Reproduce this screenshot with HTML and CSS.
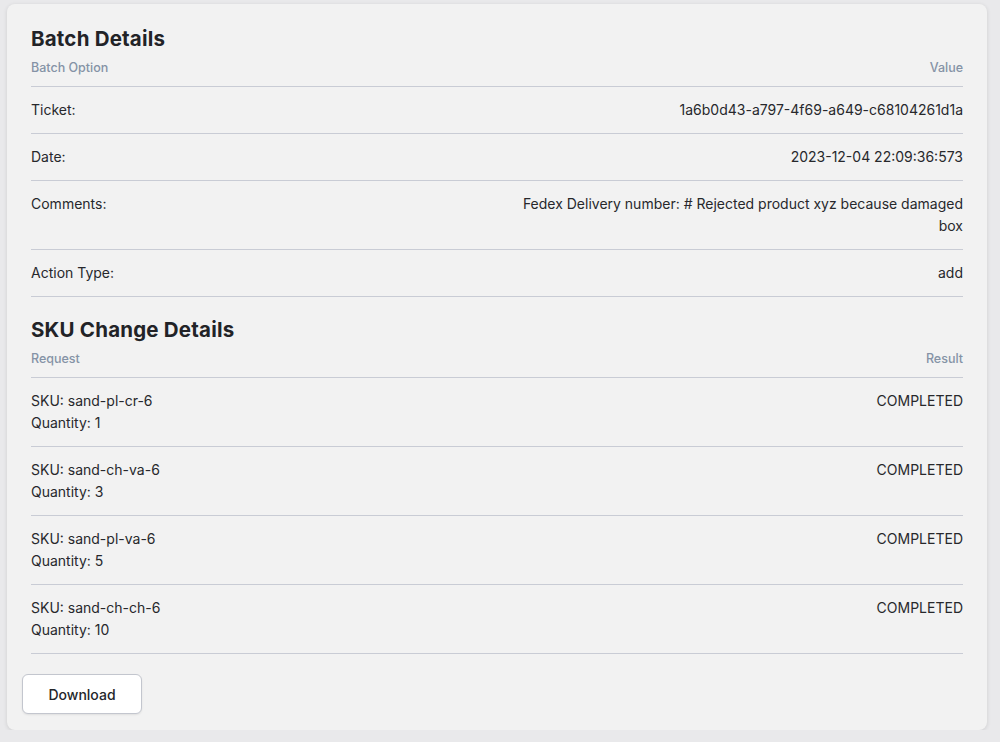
FILE: index.html
```html
<!DOCTYPE html>
<html>
<head>
<meta charset="utf-8">
<link rel="stylesheet" href="styles.css">
</head>
<body>
<div class="card">
  <div class="section">
    <h2 class="title">Batch Details</h2>
    <div class="row head"><span>Batch Option</span><span>Value</span></div>
    <div class="row"><span class="label">Ticket:</span><span class="value">1a6b0d43-a797-4f69-a649-c68104261d1a</span></div>
    <div class="row"><span class="label">Date:</span><span class="value">2023-12-04 22:09:36:573</span></div>
    <div class="row"><span class="label">Comments:</span><span class="value">Fedex Delivery number: # Rejected product xyz because damaged box</span></div>
    <div class="row"><span class="label">Action Type:</span><span class="value">add</span></div>

    <h2 class="title second">SKU Change Details</h2>
    <div class="row head"><span>Request</span><span>Result</span></div>
    <div class="row"><span class="label">SKU: sand-pl-cr-6<br>Quantity: 1</span><span class="value">COMPLETED</span></div>
    <div class="row"><span class="label">SKU: sand-ch-va-6<br>Quantity: 3</span><span class="value">COMPLETED</span></div>
    <div class="row"><span class="label">SKU: sand-pl-va-6<br>Quantity: 5</span><span class="value">COMPLETED</span></div>
    <div class="row"><span class="label">SKU: sand-ch-ch-6<br>Quantity: 10</span><span class="value">COMPLETED</span></div>
  </div>
  <div class="footer">
    <button class="btn">Download</button>
  </div>
</div>
</body>
</html>
```

FILE: styles.css
```css
html, body {
  margin: 0;
  padding: 0;
  background: #e9e9eb;
}
body {
  padding: 4px 13px 0 7px;
  font-family: Inter, "Liberation Sans", sans-serif;
  color: #27282c;
}
.card {
  background: #f2f2f2;
  border-radius: 8px;
  box-shadow: 0 1px 4px rgba(0, 0, 0, 0.12);
  padding: 20px 15px 16px;
}
.section {
  padding: 0 9px;
}
.title {
  margin: 0;
  padding-top: 1px;
  font-family: Inter, "Liberation Sans", sans-serif;
  font-weight: 700;
  font-size: 20.5px;
  line-height: 27px;
  letter-spacing: 0.2px;
  color: #222327;
}
.title.second {
  margin-top: 18px;
}
.row {
  display: flex;
  justify-content: space-between;
  align-items: flex-start;
  border-bottom: 1px solid #c9ccd5;
  padding: 12px 0;
  font-size: 14px;
  line-height: 22px;
}
.row.head {
  padding: 8px 0 10px;
  font-size: 12.5px;
  line-height: 16px;
  font-weight: 500;
  color: #8593a6;
}
.value {
  max-width: 450px;
  text-align: right;
}
.footer {
  padding-top: 20px;
}
.btn {
  font-family: Inter, "Liberation Sans", sans-serif;
  font-size: 14px;
  font-weight: 500;
  color: #25262a;
  background: #ffffff;
  border: 1px solid #c3c6ce;
  border-radius: 6px;
  box-shadow: 0 1px 2px rgba(0, 0, 0, 0.08);
  width: 120px;
  height: 40px;
  padding: 0;
  cursor: pointer;
}
```
